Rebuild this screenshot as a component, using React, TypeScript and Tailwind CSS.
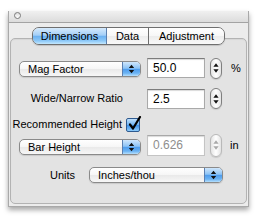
import React from "react";

function Arrows({ color = "#111" }: { color?: string }) {
  return (
    <svg width="7" height="10" viewBox="0 0 7 10">
      <path d="M3.5 0.8 L6.2 4 H0.8 Z M3.5 9.2 L6.2 6 H0.8 Z" fill={color} />
    </svg>
  );
}

function Popup({ label, className }: { label: string; className: string }) {
  return (
    <div
      className={
        "flex h-[16px] rounded-[5px] border border-[#8a8a8a] overflow-hidden bg-[linear-gradient(180deg,#ffffff,#f6f6f6_50%,#e9e9e9_51%,#f7f7f7)] shadow-[0_1px_1px_rgba(0,0,0,0.12)] " +
        className
      }
    >
      <div className="flex-1 pl-[8px] text-[11px] leading-[14px] text-black whitespace-nowrap">{label}</div>
      <div className="w-[18px] border-l border-[#5a7fb0] flex items-center justify-center bg-[linear-gradient(180deg,#cfe6fc,#8cc3f5_45%,#4f9ded_52%,#6cb3f3_80%,#b6e0fd)]">
        <Arrows />
      </div>
    </div>
  );
}

function Field({ value, disabled = false, className = "" }: { value: string; disabled?: boolean; className?: string }) {
  return (
    <div
      className={
        "w-[58px] h-[20px] bg-white border border-[#a9a9a9] border-t-[#7c7c7c] shadow-[inset_0_1px_1px_rgba(0,0,0,0.15)] pl-[5px] text-[12px] leading-[18px] " +
        (disabled ? "text-[#8e8e8e] border-[#c4c4c4] border-t-[#a8a8a8] " : "text-black ") +
        className
      }
    >
      {value}
    </div>
  );
}

function Stepper({ disabled = false, className = "" }: { disabled?: boolean; className?: string }) {
  const c = disabled ? "#a9a9a9" : "#111";
  return (
    <div
      className={
        "w-[12px] rounded-[6px] border flex flex-col items-center justify-center gap-[2px] bg-[linear-gradient(90deg,#e4e4e4,#ffffff_50%,#e4e4e4)] shadow-[0_1px_1px_rgba(0,0,0,0.12)] " +
        (disabled ? "border-[#b9b9b9] " : "border-[#7f7f7f] ") +
        className
      }
    >
      <svg width="6" height="4" viewBox="0 0 6 4">
        <path d="M3 0.3 L5.6 3.7 H0.4 Z" fill={c} />
      </svg>
      <svg width="6" height="4" viewBox="0 0 6 4">
        <path d="M3 3.7 L5.6 0.3 H0.4 Z" fill={c} />
      </svg>
    </div>
  );
}

export default function App() {
  return (
    <div className="w-[268px] h-[221px] bg-white overflow-hidden font-['Liberation_Sans',Arial,sans-serif] text-[11px] text-black">
      <div className="ml-[8px] mt-[11px] w-[241px] h-[196px] border border-t-0 border-[#a9a9a9] bg-[#ececec] shadow-[0_3px_5px_rgba(0,0,0,0.35)] flex flex-col">
        {/* title bar */}
        <div className="h-[12px] border-b border-[#a3a3a3] bg-[linear-gradient(180deg,#f0f0f0,#dcdcdc)] flex items-start">
          <div className="ml-[5px] mt-[1px] w-[7px] h-[7px] rounded-full border border-[#7a7a7a] bg-[linear-gradient(180deg,#dcdcdc,#ffffff)]" />
        </div>
        {/* body */}
        <div className="pt-[4px] flex flex-col">
          <div className="flex justify-center relative z-10 h-[18px]">
            <div className="flex h-[18px] rounded-[7px] border border-[#6f6f6f] overflow-hidden shadow-[0_1px_1px_rgba(0,0,0,0.15)]">
              <div className="w-[74px] flex items-center justify-center text-[11px] text-black bg-[linear-gradient(180deg,#d6eafc,#a4cff7_45%,#6db2f1_52%,#8cc8f8_80%,#c4e8fe)] border-r border-[#5b7fae]">
                Dimensions
              </div>
              <div className="w-[42px] flex items-center justify-center text-[11px] bg-[linear-gradient(180deg,#ffffff,#f7f7f7_50%,#ececec_51%,#f9f9f9)] border-r border-[#6f6f6f]">
                Data
              </div>
              <div className="w-[75px] flex items-center justify-center text-[11px] bg-[linear-gradient(180deg,#ffffff,#f7f7f7_50%,#ececec_51%,#f9f9f9)]">
                Adjustment
              </div>
            </div>
          </div>
          <div className="mt-[-7px] mx-[1px] h-[166px] rounded-[5px] border border-[#b3b3b3] bg-[#e3e3e3] shadow-[inset_0_1px_1px_rgba(0,0,0,0.06)] pl-[8px] pt-[18px] flex flex-col">
            {/* row 1 */}
            <div className="flex items-center h-[22px]">
              <Popup label="Mag Factor" className="w-[122px] mt-[2px]" />
              <Field value="50.0" className="ml-[6px]" />
              <Stepper className="ml-[5px] h-[21px]" />
              <div className="ml-[9px] text-[11px]">%</div>
            </div>
            {/* row 2 */}
            <div className="flex items-center h-[21px] mt-[9px]">
              <div className="w-[104px] text-right whitespace-nowrap">Wide/Narrow Ratio</div>
              <Field value="2.5" className="ml-[24px]" />
              <Stepper className="ml-[5px] h-[21px]" />
            </div>
            {/* row 3 */}
            <div className="flex items-center h-[15px] mt-[8px]">
              <div className="w-[103px] flex justify-end whitespace-nowrap">Recommended Height</div>
              <div className="ml-[4px] relative w-[14px] h-[14px] rounded-[2px] border border-[#2f5a8f] bg-[linear-gradient(180deg,#c0e0fc,#6fb3f1_48%,#3f92ea_52%,#8ccaf9)]">
                <svg className="absolute left-[1px] top-[-3px]" width="14" height="15" viewBox="0 0 14 15">
                  <path d="M2 8.5 L5 12.5 L12 1" stroke="#000" strokeWidth="2.2" fill="none" strokeLinecap="round" strokeLinejoin="round" />
                </svg>
              </div>
            </div>
            {/* row 4 */}
            <div className="flex items-center h-[24px] mt-[1px]">
              <Popup label="Bar Height" className="w-[122px] mt-[3px]" />
              <Field value="0.626" disabled className="ml-[6px] h-[21px]" />
              <Stepper disabled className="ml-[5px] h-[23px]" />
              <div className="ml-[8px] text-[11px]">in</div>
            </div>
            {/* row 5 */}
            <div className="flex items-center h-[16px] mt-[10px]">
              <div className="w-[56px] text-right whitespace-nowrap">Units</div>
              <Popup label="Inches/thou" className="ml-[14px] w-[134px]" />
            </div>
          </div>
        </div>
      </div>
    </div>
  );
}
